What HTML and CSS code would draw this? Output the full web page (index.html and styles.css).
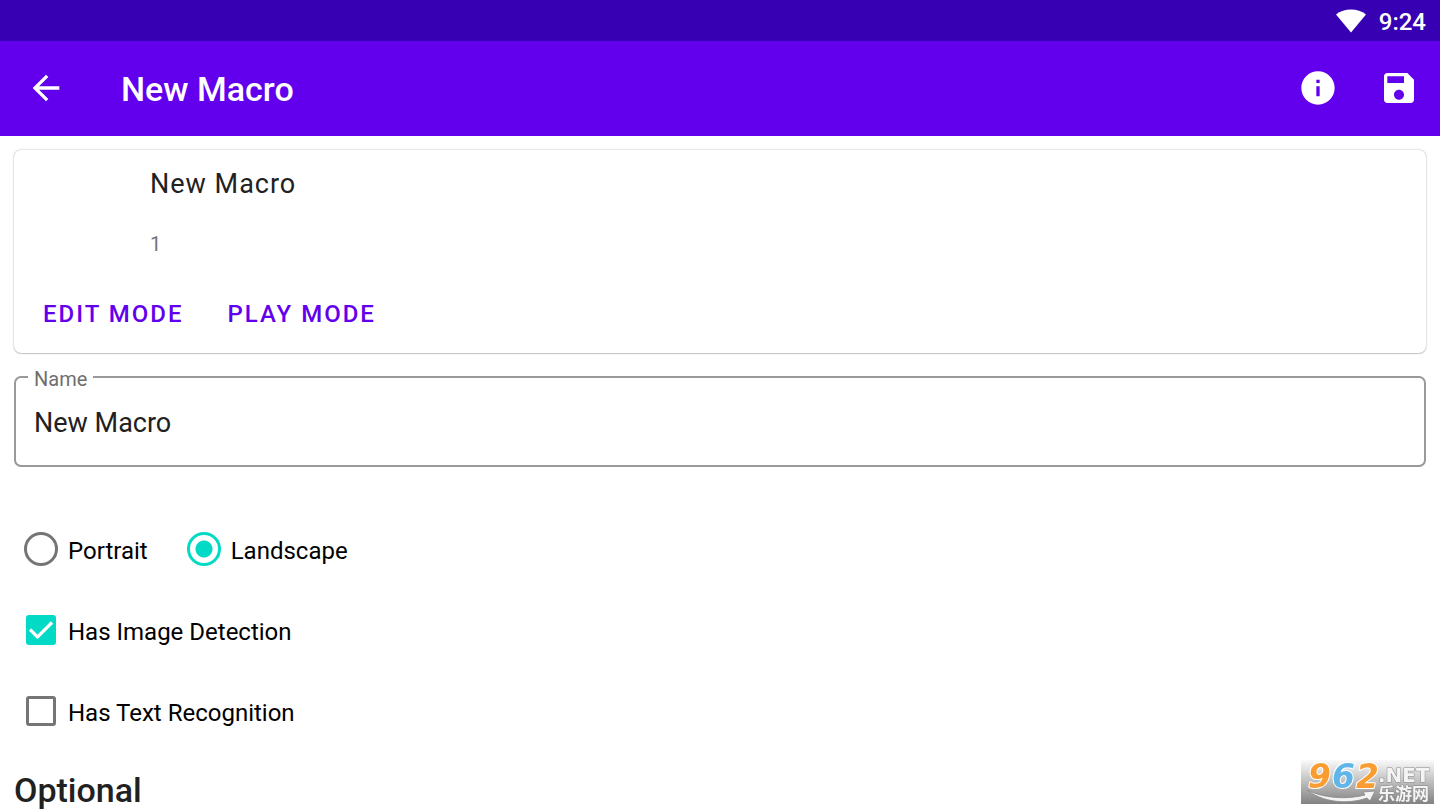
FILE: index.html
```html
<!DOCTYPE html>
<html lang="en">

<head>
    <meta charset="UTF-8">
    <meta name="viewport" content="width=device-width, initial-scale=1.0">
    <title>New Macro</title>
    <link rel="stylesheet" href="styles.css">
</head>

<body>
    <div class="status-bar">
        <svg class="wifi" viewBox="0 0 30 24" aria-hidden="true">
            <path d="M15 23.500L0 5.500C4 2 9.500.5 15 .5s11 1.500 15 5z" fill="#fff" />
        </svg>
        <span class="clock">9:24</span>
    </div>

    <header class="app-bar">
        <button class="icon-button" aria-label="Back">
            <svg class="icon" viewBox="0 0 24 24">
                <path d="M20 11H7.830l5.590-5.590L12 4l-8 8 8 8 1.410-1.410L7.830 13H20v-2z" />
            </svg>
        </button>
        <h1 class="app-title">New Macro</h1>
        <div class="app-actions">
            <button class="icon-button" aria-label="Info">
                <svg class="icon" viewBox="0 0 24 24">
                    <path d="M12 2C6.480 2 2 6.480 2 12s4.480 10 10 10 10-4.480 10-10S17.520 2 12 2zm1 15h-2v-6h2v6zm0-8h-2V7h2v2z" />
                </svg>
            </button>
            <button class="icon-button" aria-label="Save">
                <svg class="icon" viewBox="0 0 24 24">
                    <path d="M17 3H5c-1.110 0-2 .9-2 2v14c0 1.100.89 2 2 2h14c1.100 0 2-.9 2-2V7l-4-4zm-5 16c-1.660 0-3-1.340-3-3s1.340-3 3-3 3 1.340 3 3-1.340 3-3 3zm3-10H5V5h10v4z" />
                </svg>
            </button>
        </div>
    </header>

    <main class="content">
        <section class="card">
            <div class="card-text">
                <h2 class="card-title">New Macro</h2>
                <p class="card-count">1</p>
            </div>
            <div class="card-actions">
                <button class="text-button">EDIT MODE</button>
                <button class="text-button">PLAY MODE</button>
            </div>
        </section>

        <fieldset class="field">
            <legend class="field-legend"><label for="name">Name</label></legend>
            <input class="field-input" type="text" id="name" value="New Macro">
        </fieldset>

        <div class="options">
            <div class="option-row">
                <label class="option"><input class="radio" type="radio" name="orientation"><span>Portrait</span></label>
                <label class="option"><input class="radio" type="radio" name="orientation" checked><span>Landscape</span></label>
            </div>
            <div class="option-row">
                <label class="option"><input class="checkbox" type="checkbox" checked><span>Has Image Detection</span></label>
            </div>
            <div class="option-row">
                <label class="option"><input class="checkbox" type="checkbox"><span>Has Text Recognition</span></label>
            </div>
        </div>

        <h2 class="section-title">Optional</h2>
    </main>

    <svg class="site-badge" viewBox="0 0 133 44" role="img" aria-label="962.NET">
        <defs>
            <linearGradient id="badge-bg" x1="0" y1="0" x2="0" y2="1">
                <stop offset="0" stop-color="#fafafa" />
                <stop offset="1" stop-color="#828282" />
            </linearGradient>
        </defs>
        <rect width="133" height="44" fill="url(#badge-bg)" />
        <path d="M6 30C22 38 45 40 64 35l-2-3 12-1-5 10-3-3C46 45 21 42 6 30z" fill="#f4f4f4" stroke="#888" stroke-width=".8" />
        <g class="badge-digits">
            <text x="7" y="28" fill="#f99d33">9</text>
            <text x="31" y="28" fill="#62b5e8">6</text>
            <text x="55" y="28" fill="#f99d33">2</text>
        </g>
        <text class="badge-net" x="77" y="22">.NET</text>
        <text class="badge-name" x="77" y="40">乐游网</text>
    </svg>
</body>

</html>
```

FILE: styles.css
```css
* {
    box-sizing: border-box;
}

body {
    margin: 0;
    min-height: 100vh;
    overflow: hidden;
    background-color: #fff;
    color: #212121;
    font-family: Roboto, sans-serif;
}

h1,
h2,
p {
    margin: 0;
}

button {
    border: none;
    padding: 0;
    background: none;
    font-family: inherit;
    cursor: pointer;
}

.status-bar {
    display: flex;
    align-items: center;
    justify-content: flex-end;
    gap: 13px;
    height: 41px;
    padding-right: 14px;
    background-color: #3700b3;
    color: #fff;
}

.wifi {
    width: 30px;
    height: 24px;
}

.clock {
    font-size: 24px;
    font-weight: 500;
    line-height: 28px;
    padding-top: 2px;
}

.app-bar {
    display: flex;
    align-items: center;
    height: 95px;
    padding: 0 21px 2px 26px;
    background-color: #6200ee;
    color: #fff;
}

.icon-button {
    display: flex;
}

.icon {
    width: 40px;
    height: 40px;
    fill: #fff;
}

.app-title {
    margin-left: 55px;
    padding-top: 2px;
    font-size: 34px;
    font-weight: 500;
    line-height: 40px;
}

.app-actions {
    display: flex;
    gap: 41px;
    margin-left: auto;
}

.content {
    padding: 14px 14px 0;
}

.card {
    padding: 18px 16px 15px;
    border-radius: 7px;
    box-shadow: 0 0 2px rgba(0, 0, 0, 0.35), 0 1px 1px rgba(0, 0, 0, 0.15);
}

.card-text {
    padding-left: 120px;
}

.card-title {
    font-size: 27px;
    font-weight: 400;
    line-height: 32px;
    letter-spacing: 1px;
}

.card-count {
    margin-top: 32px;
    color: #757575;
    font-size: 20px;
    line-height: 24px;
}

.card-actions {
    display: flex;
    gap: 18px;
    margin-top: 34px;
}

.text-button {
    height: 48px;
    padding: 0 13px;
    border-radius: 6px;
    color: #6200ee;
    font-size: 24px;
    font-weight: 500;
    letter-spacing: 2px;
}

.field {
    margin: 10px 0 0;
    padding: 0 18px 10px 12px;
    border: 2px solid #999;
    border-radius: 7px;
}

.field-legend {
    padding: 4px 6px 0;
    color: #6f6f6f;
    font-size: 20px;
    line-height: 24px;
}

.field-input {
    display: block;
    width: 100%;
    height: 64px;
    padding: 0 6px;
    border: none;
    outline: none;
    background: none;
    color: #212121;
    font-family: inherit;
    font-size: 27px;
}

.options {
    margin-top: 41px;
    padding-left: 10px;
}

.option-row {
    display: flex;
    align-items: center;
    gap: 39px;
    height: 81px;
}

.option {
    display: flex;
    align-items: center;
    gap: 10px;
    color: #000;
    font-size: 24px;
    line-height: 28px;
}

.option span {
    padding-top: 4px;
}

.radio,
.checkbox {
    appearance: none;
    flex: none;
    margin: 0;
    border: 3px solid #757575;
}

.radio {
    width: 34px;
    height: 34px;
    border-radius: 50%;
}

.radio:checked {
    border-color: #03dac5;
    background: radial-gradient(circle, #03dac5 8px, transparent 9px);
}

.checkbox {
    width: 30px;
    height: 30px;
    margin: 0 2px;
    border-radius: 3px;
}

.checkbox:checked {
    border-color: #03dac5;
    background: #03dac5 url("data:image/svg+xml,%3Csvg xmlns='http://www.w3.org/2000/svg' viewBox='0 0 30 30'%3E%3Cpath d='M4 14.500l7.500 7.500L26 7.500' fill='none' stroke='white' stroke-width='3.200'/%3E%3C/svg%3E") border-box center / 30px 30px no-repeat;
}

.section-title {
    margin-top: 19px;
    font-size: 34px;
    font-weight: 500;
    line-height: 40px;
}

.site-badge {
    position: fixed;
    right: 6px;
    bottom: 6px;
    width: 133px;
    height: 44px;
    overflow: visible;
}

.site-badge text {
    paint-order: stroke;
    stroke-linejoin: round;
}

.badge-digits {
    font: italic bold 33px "DejaVu Sans", sans-serif;
    stroke: #fff;
    stroke-width: 2px;
}

.badge-net {
    font: bold 20px "DejaVu Sans", sans-serif;
    fill: #f4f4f4;
    stroke: #888;
    stroke-width: 1px;
}

.badge-name {
    font: bold 17px "Noto Sans CJK SC", sans-serif;
    fill: #f4f4f4;
    stroke: #888;
    stroke-width: 1px;
}
```
